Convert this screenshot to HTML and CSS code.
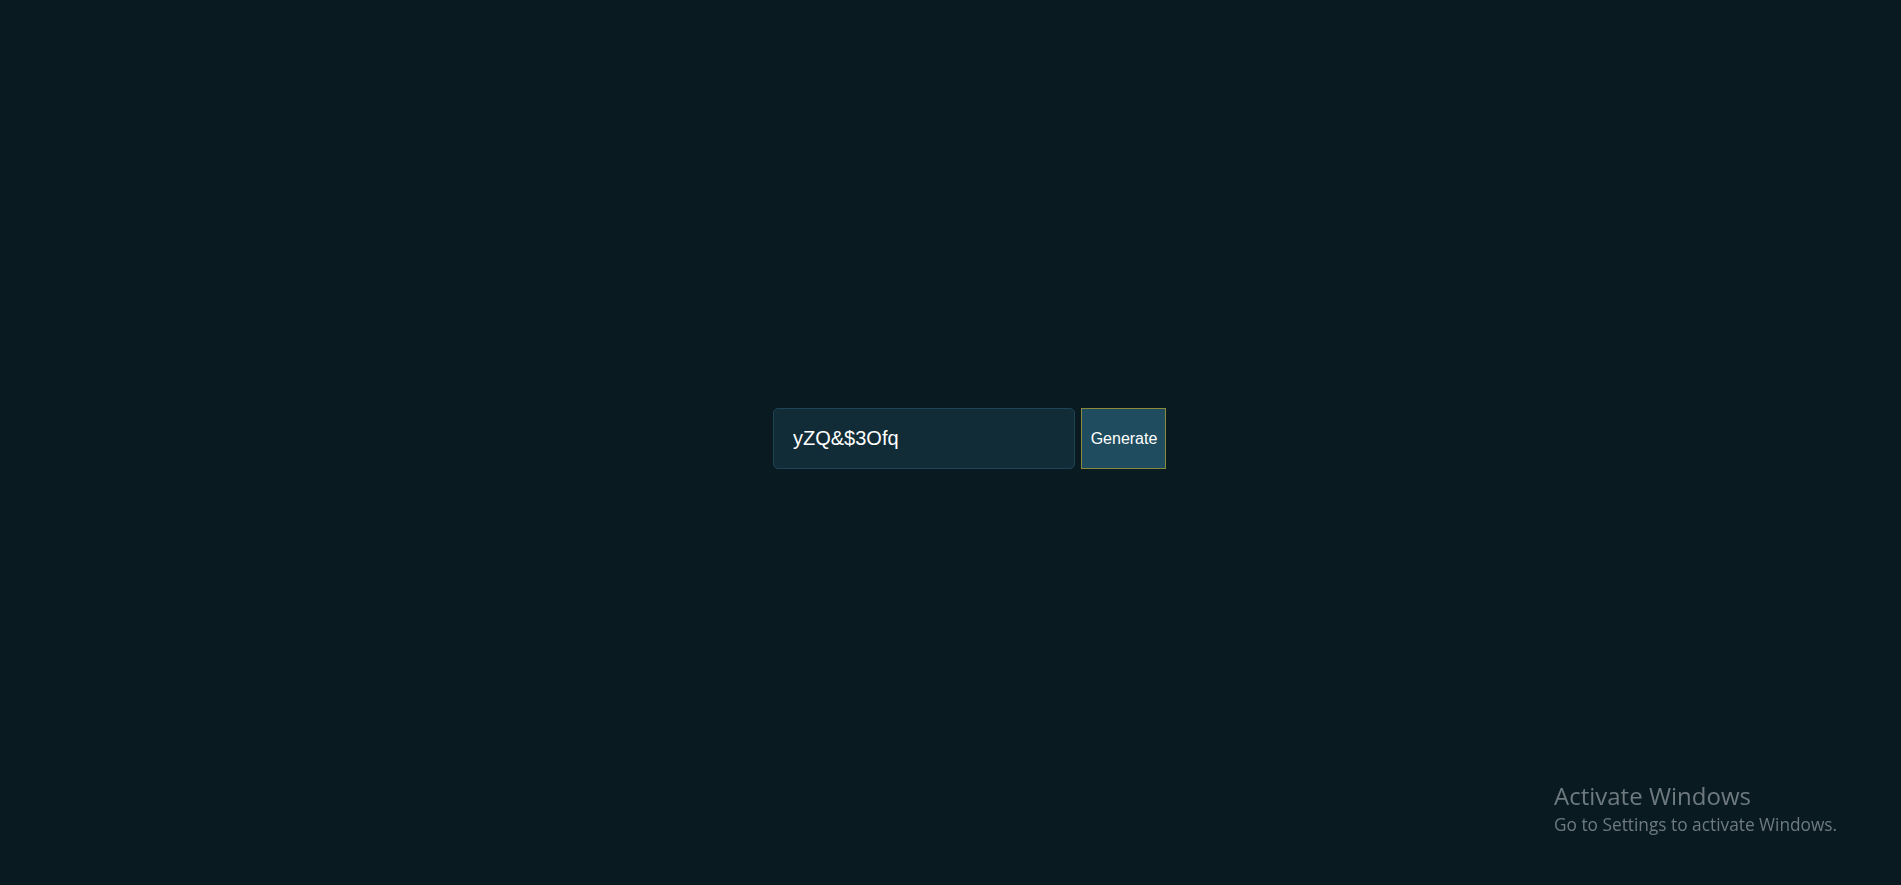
FILE: index.html
```html
<!DOCTYPE html>
<html>
<head>
<meta charset="utf-8">
<link rel="stylesheet" href="styles.css">
</head>
<body>
<main class="stage">
  <div class="generator">
    <input class="password" type="text" value="yZQ&amp;$3Ofq" readonly>
    <button class="generate">Generate</button>
  </div>
</main>
<div class="watermark">
  <div class="wm-title">Activate Windows</div>
  <div class="wm-sub">Go to Settings to activate Windows.</div>
</div>
</body>
</html>
```
FILE: styles.css
```css
html, body {
  margin: 0;
  padding: 0;
  background: #0a1a21;
  height: 100%;
}
.stage {
  height: 100vh;
  box-sizing: border-box;
  display: flex;
  justify-content: center;
  align-items: center;
  padding-left: 38px;
  padding-bottom: 9px;
}
.generator {
  display: flex;
  gap: 6px;
}
.password {
  width: 302px;
  height: 61px;
  box-sizing: border-box;
  background: #112b37;
  border: 1px solid #1d4557;
  border-radius: 5px;
  color: #ffffff;
  font-family: "Liberation Sans", Arial, sans-serif;
  font-size: 20px;
  padding: 1px 0 0 19px;
  outline: none;
}
.generate {
  width: 85px;
  height: 61px;
  box-sizing: border-box;
  background: #1f4d5f;
  border: 1px solid #8a8a3c;
  border-radius: 0;
  color: #ffffff;
  font-family: "Liberation Sans", Arial, sans-serif;
  font-size: 16px;
  padding: 1px 0 0 1px;
}
.watermark {
  position: fixed;
  left: 1554px;
  top: 780px;
  color: #6e7a80;
  font-family: "Open Sans", "Noto Sans", sans-serif;
}
.wm-title {
  font-size: 24px;
  line-height: 32px;
}
.wm-sub {
  font-size: 17.3px;
  line-height: 26px;
}
```
